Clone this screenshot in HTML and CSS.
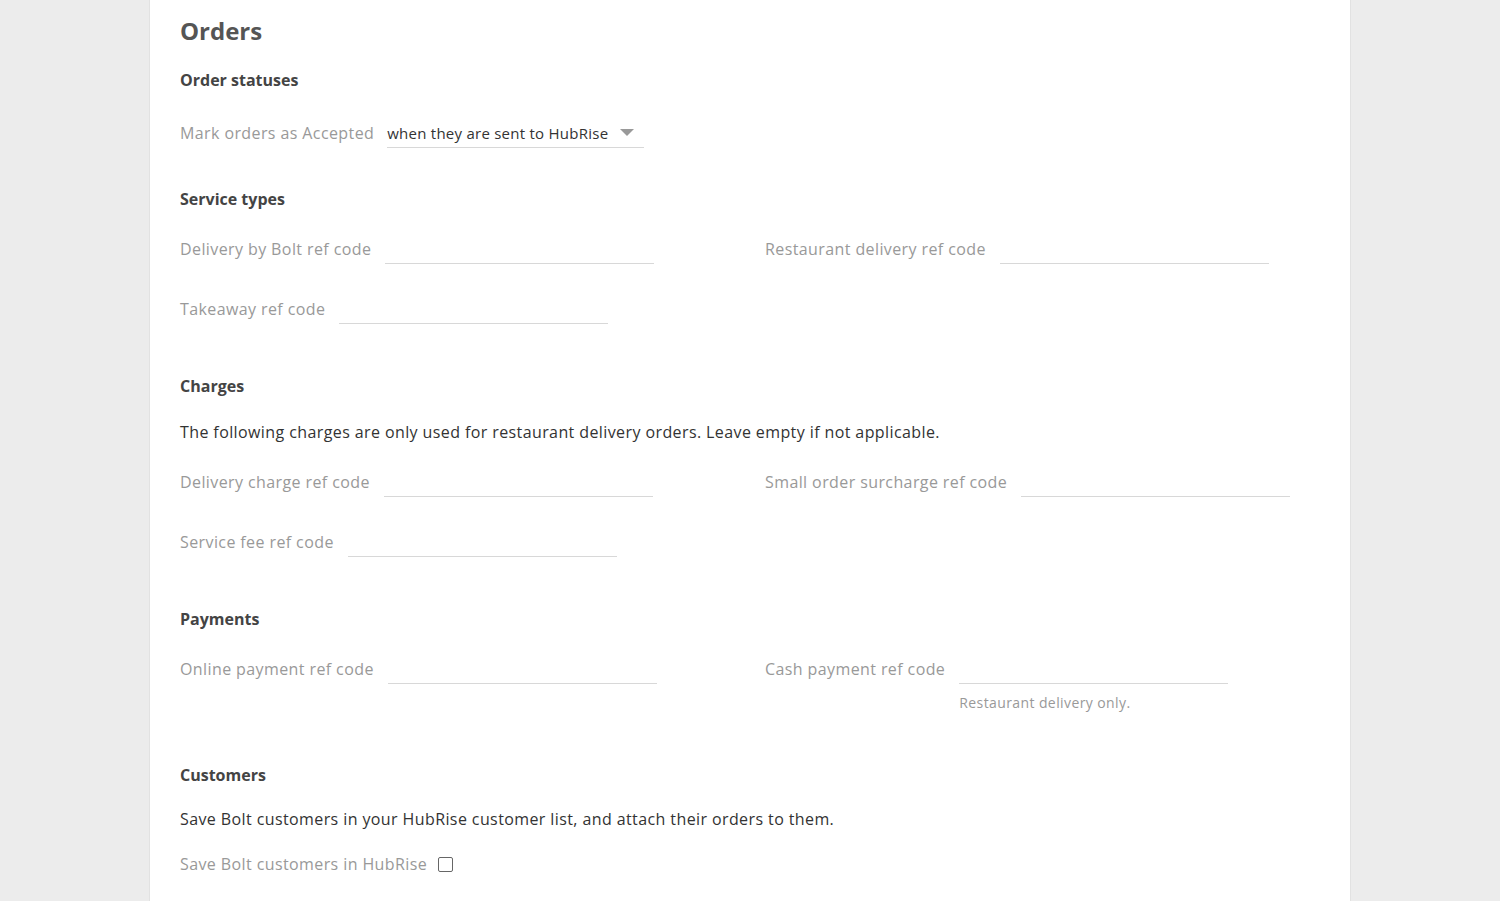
FILE: index.html
```html
<!DOCTYPE html>
<html lang="en">

<head>
  <meta charset="UTF-8" />
  <meta name="viewport" content="width=device-width, initial-scale=1.0" />
  <title>Orders</title>
  <link rel="stylesheet" href="styles.css">
</head>

<body>
  <div class="page">

    <h1 class="page-title">Orders</h1>

    <!-- Order statuses -->
    <div class="section">
      <h3 class="section-title section-title--first">Order statuses</h3>
      <div class="field field--select">
        <label class="field-label">Mark orders as Accepted</label>
        <div class="select">
          <span class="select-value">when they are sent to HubRise</span>
          <span class="select-arrow"></span>
        </div>
      </div>
    </div>

    <!-- Service types -->
    <div class="section">
      <h3 class="section-title">Service types</h3>
      <div class="row">
        <div class="field">
          <label class="field-label">Delivery by Bolt ref code</label>
          <input class="field-input" type="text" />
        </div>
        <div class="field">
          <label class="field-label">Restaurant delivery ref code</label>
          <input class="field-input" type="text" />
        </div>
        <div class="field">
          <label class="field-label">Takeaway ref code</label>
          <input class="field-input" type="text" />
        </div>
      </div>
    </div>

    <!-- Charges -->
    <div class="section">
      <h3 class="section-title">Charges</h3>
      <p class="section-text">The following charges are only used for restaurant delivery orders. Leave empty if not applicable.</p>
      <div class="row">
        <div class="field">
          <label class="field-label">Delivery charge ref code</label>
          <input class="field-input" type="text" />
        </div>
        <div class="field">
          <label class="field-label">Small order surcharge ref code</label>
          <input class="field-input" type="text" />
        </div>
        <div class="field">
          <label class="field-label">Service fee ref code</label>
          <input class="field-input" type="text" />
        </div>
      </div>
    </div>

    <!-- Payments -->
    <div class="section">
      <h3 class="section-title">Payments</h3>
      <div class="row">
        <div class="field">
          <label class="field-label">Online payment ref code</label>
          <input class="field-input" type="text" />
        </div>
        <div class="field field--help">
          <label class="field-label">Cash payment ref code</label>
          <div class="field-control">
            <input class="field-input" type="text" />
            <span class="field-help">Restaurant delivery only.</span>
          </div>
        </div>
      </div>
    </div>

    <!-- Customers -->
    <div class="section">
      <h3 class="section-title section-title--tight">Customers</h3>
      <p class="section-text section-text--tight">Save Bolt customers in your HubRise customer list, and attach their orders to them.</p>
      <div class="field field--check">
        <label class="field-label">Save Bolt customers in HubRise</label>
        <span class="checkbox"></span>
      </div>
    </div>

  </div>
</body>

</html>
```

FILE: styles.css
```css
* {
  box-sizing: border-box;
}

body {
  margin: 0;
  background: #ececec;
  font-family: "Open Sans", "Noto Sans", sans-serif;
  font-size: 16px;
  letter-spacing: 0.4px;
  color: #333;
}

.page {
  width: 1200px;
  min-height: 901px;
  margin: 0 auto;
  padding: 16px 30px 0 30px;
  background: #fff;
  box-shadow: -1px 0 0 #e2e2e2, 1px 0 0 #e2e2e2;
}

.page-title {
  margin: 0 0 23px 0;
  font-size: 24px;
  line-height: 30px;
  font-weight: 700;
  letter-spacing: 0;
  color: #555;
}

.section + .section {
  padding-top: 21px;
}

.section-title {
  margin: 0 0 24px 0;
  font-size: 16px;
  line-height: 22px;
  font-weight: 700;
  letter-spacing: 0;
  color: #444;
}

.section-title--first {
  margin-bottom: 27px;
}

.section-title--tight {
  margin-bottom: 22px;
}

.section-text {
  margin: 0 0 24px 0;
  line-height: 22px;
  color: #333;
}

.section-text--tight {
  margin-bottom: 19px;
}

.row {
  display: grid;
  grid-template-columns: 1fr 1fr;
  column-gap: 30px;
}

.field {
  display: flex;
  align-items: center;
  height: 30px;
  margin-bottom: 30px;
}

.field--select {
  margin-bottom: 19px;
}

.field-label {
  color: #999;
  line-height: 30px;
  margin-right: 14px;
  white-space: nowrap;
}

.field-input {
  width: 269px;
  height: 30px;
  padding: 0;
  border: none;
  border-bottom: 1px solid #d8d8d8;
  font: inherit;
  outline: none;
}

.select {
  width: 257px;
  height: 30px;
  display: flex;
  align-items: center;
  justify-content: space-between;
  border-bottom: 1px solid #d8d8d8;
  margin-left: -1px;
}

.select-value {
  font-size: 15px;
  letter-spacing: 0.25px;
  color: #333;
}

.select-arrow {
  width: 0;
  height: 0;
  margin-right: 10px;
  border-left: 7px solid transparent;
  border-right: 7px solid transparent;
  border-top: 7px solid #999;
}

.field--help {
  align-items: flex-start;
  height: auto;
}

.field-control {
  display: flex;
  flex-direction: column;
}

.field-help {
  margin-top: 9px;
  font-size: 14px;
  line-height: 20px;
  color: #999;
}

.field--check {
  margin-bottom: 0;
}

.field--check .field-label {
  margin-right: 11px;
}

.checkbox {
  width: 15px;
  height: 15px;
  border: 1px solid #666;
  border-radius: 2px;
}
```
